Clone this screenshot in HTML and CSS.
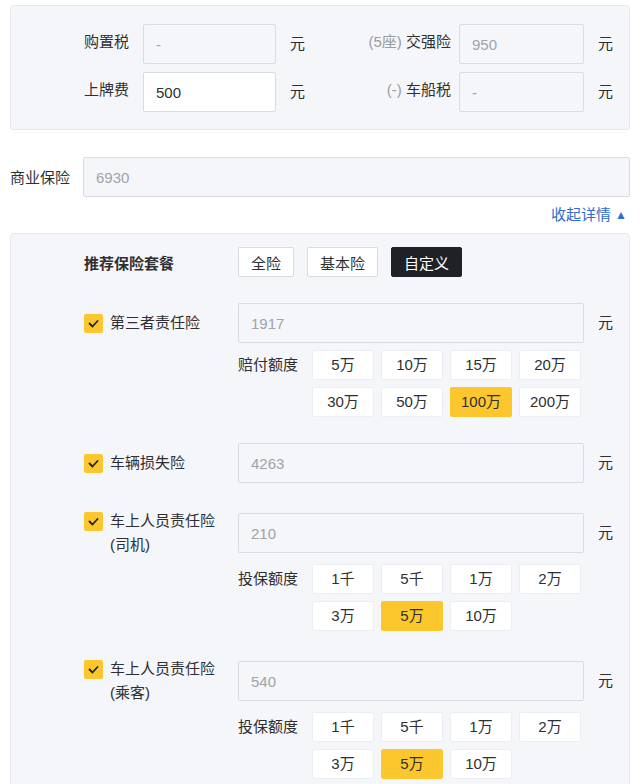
FILE: index.html
```html
<!DOCTYPE html>
<html lang="zh-CN">
<head>
<meta charset="utf-8">
<title>保险费用</title>
<link rel="stylesheet" href="styles.css">
</head>
<body>
<div class="panel fees">
  <span class="lbl">购置税</span>
  <div class="cell"><input class="field" value="-" readonly></div>
  <span class="unit">元</span>
  <span class="lbl"><span class="muted">(5座)</span> 交强险</span>
  <div class="cell cell-r"><input class="field" value="950" readonly></div>
  <span class="unit">元</span>

  <span class="lbl">上牌费</span>
  <div class="cell"><input class="field field-active" value="500"></div>
  <span class="unit">元</span>
  <span class="lbl"><span class="muted">(-)</span> 车船税</span>
  <div class="cell cell-r"><input class="field" value="-" readonly></div>
  <span class="unit">元</span>
</div>

<div class="biz">
  <span class="biz-lbl">商业保险</span>
  <input class="field biz-field" value="6930" readonly>
</div>

<div class="toggle">收起详情<span class="caret">▲</span></div>

<div class="panel detail">
  <div class="pkg">
    <span class="pkg-lbl">推荐保险套餐</span>
    <div class="pkg-btns">
      <button class="pbtn">全险</button>
      <button class="pbtn">基本险</button>
      <button class="pbtn pbtn-on">自定义</button>
    </div>
  </div>

  <div class="item">
    <label class="chk-lbl"><span class="chk"><svg viewBox="0 0 19 19" width="19" height="19"><polyline points="5.5,9.5 8.5,12.5 13.5,7" fill="none" stroke="#222" stroke-width="1.8" stroke-linecap="round" stroke-linejoin="round"/></svg></span><span class="txt">第三者责任险</span></label>
    <input class="field" value="1917" readonly>
    <span class="unit">元</span>
    <div class="opts">
      <span class="opt-lbl">赔付额度</span>
      <div class="opt-grid">
        <span class="opt">5万</span><span class="opt">10万</span><span class="opt">15万</span><span class="opt">20万</span>
        <span class="opt">30万</span><span class="opt">50万</span><span class="opt opt-on">100万</span><span class="opt">200万</span>
      </div>
    </div>
  </div>

  <div class="item">
    <label class="chk-lbl"><span class="chk"><svg viewBox="0 0 19 19" width="19" height="19"><polyline points="5.5,9.5 8.5,12.5 13.5,7" fill="none" stroke="#222" stroke-width="1.8" stroke-linecap="round" stroke-linejoin="round"/></svg></span><span class="txt">车辆损失险</span></label>
    <input class="field" value="4263" readonly>
    <span class="unit">元</span>
  </div>

  <div class="item">
    <label class="chk-lbl"><span class="chk"><svg viewBox="0 0 19 19" width="19" height="19"><polyline points="5.5,9.5 8.5,12.5 13.5,7" fill="none" stroke="#222" stroke-width="1.8" stroke-linecap="round" stroke-linejoin="round"/></svg></span><span class="txt">车上人员责任险<br>(司机)</span></label>
    <input class="field" value="210" readonly>
    <span class="unit">元</span>
    <div class="opts">
      <span class="opt-lbl">投保额度</span>
      <div class="opt-grid">
        <span class="opt">1千</span><span class="opt">5千</span><span class="opt">1万</span><span class="opt">2万</span>
        <span class="opt">3万</span><span class="opt opt-on">5万</span><span class="opt">10万</span>
      </div>
    </div>
  </div>

  <div class="item">
    <label class="chk-lbl"><span class="chk"><svg viewBox="0 0 19 19" width="19" height="19"><polyline points="5.5,9.5 8.5,12.5 13.5,7" fill="none" stroke="#222" stroke-width="1.8" stroke-linecap="round" stroke-linejoin="round"/></svg></span><span class="txt">车上人员责任险<br>(乘客)</span></label>
    <input class="field" value="540" readonly>
    <span class="unit">元</span>
    <div class="opts">
      <span class="opt-lbl">投保额度</span>
      <div class="opt-grid">
        <span class="opt">1千</span><span class="opt">5千</span><span class="opt">1万</span><span class="opt">2万</span>
        <span class="opt">3万</span><span class="opt opt-on">5万</span><span class="opt">10万</span>
      </div>
    </div>
  </div>
</div>
</body>
</html>
```

FILE: styles.css
```css
* { box-sizing: border-box; }

body {
  margin: 0;
  background: #ffffff;
  color: #2e2f33;
  font-family: "Liberation Sans", "Noto Sans CJK SC", sans-serif;
  font-size: 15px;
  overflow: hidden;
}

.panel {
  background: #f5f6fa;
  border: 1px solid #e5e7eb;
  border-radius: 4px;
}

.field {
  display: block;
  width: 100%;
  height: 40px;
  margin: 0;
  padding: 0 12px;
  border: 1px solid #d9dbe0;
  border-radius: 2px;
  background: #f5f6fa;
  color: #a0a3a8;
  font-family: inherit;
  font-size: 15px;
  outline: none;
}

.field-active {
  background: #ffffff;
  color: #2e2f33;
}

.muted { color: #9a9ca1; }

/* top fees panel */
.fees {
  margin: 5px 10px 0;
  padding: 18px 0 17px;
  display: grid;
  grid-template-columns: 118px 147px 29px 146px 133px auto;
  row-gap: 8px;
  align-items: center;
}

.lbl { text-align: right; line-height: 36px; padding-bottom: 4px; white-space: nowrap; }
.cell { padding-left: 14px; }
.cell-r { padding-left: 8px; }
.unit { padding: 0 0 4px 14px; white-space: nowrap; }

/* commercial insurance */
.biz {
  display: flex;
  align-items: center;
  margin: 27px 10px 0;
}
.biz-lbl { width: 73px; flex: none; padding-bottom: 2px; }
.biz-field { flex: 1; }

.toggle {
  margin: 8px 13px 0 0;
  text-align: right;
  line-height: 20px;
  color: #2f6bd0;
}
.caret { font-size: 12px; margin-left: 4px; vertical-align: 1px; }

/* detail panel */
.detail {
  margin: 8px 10px 0;
  padding: 13px 0 24px 73px;
}

.pkg {
  display: grid;
  grid-template-columns: 154px auto;
  align-items: center;
}
.pkg-lbl { font-weight: bold; }
.pkg-btns { display: flex; gap: 13px; }
.pbtn {
  height: 30px;
  padding: 0 12px;
  border: 1px solid #d9dbe0;
  border-radius: 2px;
  background: #ffffff;
  color: #2e2f33;
  font-family: inherit;
  font-size: 15px;
}
.pbtn-on {
  background: #1f2126;
  border-color: #1f2126;
  color: #ffffff;
}

.item {
  margin-top: 26px;
  display: grid;
  grid-template-columns: 154px 346px auto;
  align-items: center;
}

.chk-lbl {
  display: flex;
  align-items: flex-start;
  line-height: 24px;
}
.chk {
  flex: none;
  width: 19px;
  height: 19px;
  margin: 3px 7px 0 0;
  border-radius: 2px;
  background: #fcc72d;
  display: flex;
}

.opts {
  grid-column: 2 / span 2;
  display: flex;
  align-items: flex-start;
  margin-top: 7px;
}
.opt-lbl { width: 74px; flex: none; line-height: 30px; }
.opt-grid {
  display: grid;
  grid-template-columns: repeat(4, 62px);
  gap: 7px;
}
.opt {
  height: 30px;
  line-height: 28px;
  text-align: center;
  background: #ffffff;
  border: 1px solid #eceef2;
  border-radius: 2px;
  white-space: nowrap;
}
.opt-on {
  background: #fcc72d;
  border-color: #fcc72d;
}
```
